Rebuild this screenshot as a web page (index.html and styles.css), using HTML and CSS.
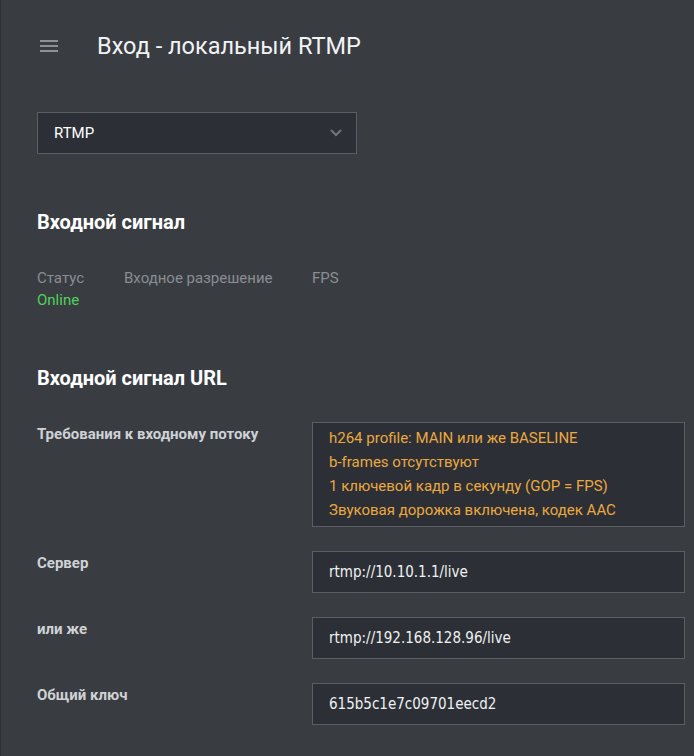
FILE: index.html
```html
<!DOCTYPE html>
<html lang="ru">
<head>
<meta charset="utf-8">
<title>Вход - локальный RTMP</title>
<link rel="stylesheet" href="styles.css">
</head>
<body>
<div class="app">
  <header class="topbar">
    <span class="menu" aria-label="menu">
      <svg width="18" height="12" viewBox="0 0 18 12"><rect x="0" y="0" width="18" height="2"/><rect x="0" y="5" width="18" height="2"/><rect x="0" y="10" width="18" height="2"/></svg>
    </span>
    <h1 class="title">Вход - локальный RTMP</h1>
  </header>
  <main class="content">
    <div class="select">
      <span class="select-value">RTMP</span>
      <svg class="chevron" width="12" height="8" viewBox="0 0 12 8"><polyline points="1,1 6,6 11,1" fill="none" stroke-width="2"/></svg>
    </div>

    <h2 class="section-title first">Входной сигнал</h2>
    <div class="stats">
      <div class="stat stat-status"><div class="stat-label">Статус</div><div class="stat-value online">Online</div></div>
      <div class="stat stat-res"><div class="stat-label">Входное разрешение</div><div class="stat-value"></div></div>
      <div class="stat"><div class="stat-label">FPS</div><div class="stat-value"></div></div>
    </div>

    <h2 class="section-title url">Входной сигнал URL</h2>
    <div class="form">
      <div class="row">
        <div class="label">Требования к входному потоку</div>
        <div class="box req">
          <div>h264 profile: MAIN или же BASELINE</div>
          <div>b-frames отсутствуют</div>
          <div>1 ключевой кадр в секунду (GOP = FPS)</div>
          <div>Звуковая дорожка включена, кодек AAC</div>
        </div>
      </div>
      <div class="row">
        <div class="label">Сервер</div>
        <div class="box field">rtmp://10.10.1.1/live</div>
      </div>
      <div class="row">
        <div class="label">или же</div>
        <div class="box field">rtmp://192.168.128.96/live</div>
      </div>
      <div class="row">
        <div class="label">Общий ключ</div>
        <div class="box field">615b5c1e7c09701eecd2</div>
      </div>
    </div>
  </main>
</div>
</body>
</html>
```
FILE: styles.css
```css
html, body {
  margin: 0;
  padding: 0;
  background: #393d42;
}
body {
  font-family: Roboto, "Liberation Sans", sans-serif;
  color: #ffffff;
  height: 756px;
  overflow: hidden;
}
.app {
  border-left: 1px solid #2d3035;
  min-height: 756px;
  box-sizing: border-box;
}
.topbar {
  display: flex;
  align-items: center;
  height: 92px;
  padding-left: 39px;
}
.menu {
  display: flex;
  width: 18px;
  height: 12px;
  margin-right: 39px;
}
.menu svg { fill: #8d9094; display: block; }
.title {
  margin: 0;
  font-size: 23.5px;
  font-weight: 400;
  color: #f2f3f4;
  line-height: 28px;
}
.content {
  padding: 20px 9px 0 36px;
}
.select {
  width: 320px;
  height: 42px;
  box-sizing: border-box;
  border: 1px solid #5b5f64;
  background: #2c3036;
  display: flex;
  align-items: center;
  justify-content: space-between;
  padding: 0 14px 0 16px;
}
.select-value {
  font-size: 15px;
  color: #ffffff;
}
.chevron { stroke: #72767b; display: block; }
.section-title {
  margin: 56px 0 0;
  font-size: 20px;
  line-height: 24px;
  font-weight: 700;
  color: #ffffff;
}
.section-title.url { margin-top: 55px; }
.stats {
  display: flex;
  margin-top: 33px;
}
.stat-label, .stat-value {
  font-size: 15px;
  line-height: 22px;
  height: 22px;
}
.stat-label { color: #8a8d91; }
.stat-status { width: 87px; }
.stat-res { width: 188px; }
.online { color: #4fd25c; }
.form {
  margin-top: 32px;
  display: flex;
  flex-direction: column;
  gap: 24px;
}
.row {
  display: grid;
  grid-template-columns: 275px 1fr;
  align-items: start;
}
.label {
  font-size: 15px;
  font-weight: 700;
  line-height: 20px;
  padding-top: 2px;
  color: #cfd2d5;
}
.box {
  border: 1px solid #5b5f64;
  background: #2c3036;
  box-sizing: border-box;
}
.req {
  padding: 3px 16px 4px;
  font-size: 15px;
  line-height: 24px;
  color: #eba83f;
}
.field {
  height: 42px;
  display: flex;
  align-items: center;
  padding: 0 16px;
  font-family: "DejaVu Sans Condensed", "DejaVu Sans", sans-serif;
  font-stretch: condensed;
  font-size: 15px;
  color: #f0f1f2;
}
```
